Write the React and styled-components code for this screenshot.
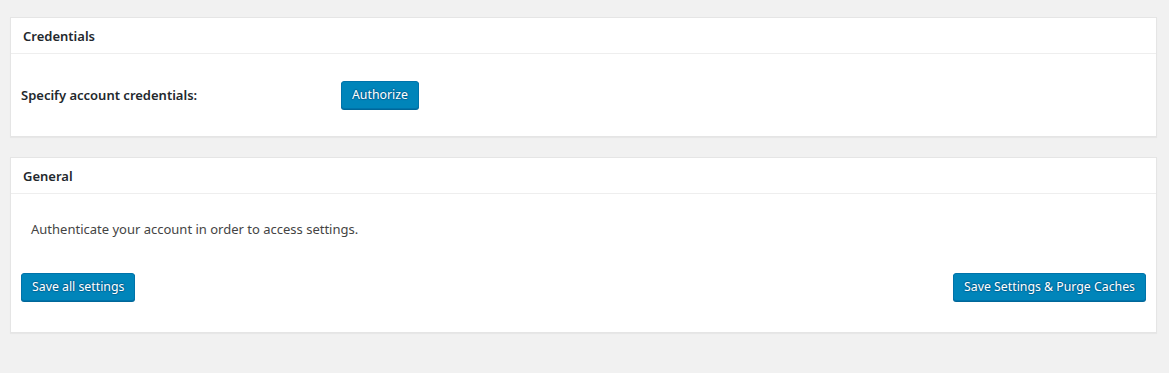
import React from 'react'
import styled, { createGlobalStyle } from 'styled-components'

const GlobalStyle = createGlobalStyle`
    html, body {
        margin: 0;
        padding: 0;
        background: #f1f1f1;
    }
    body {
        font-family: "Noto Sans", "Open Sans", sans-serif;
        font-size: 13px;
        color: #444;
    }
`

const Page = styled.div`
    padding: 17px 12px 20px 10px;
    min-height: 373px;
    box-sizing: border-box;
`

const Postbox = styled.div`
    background: #fff;
    border: 1px solid #e5e5e5;
    box-shadow: 0 1px 1px rgba(0, 0, 0, 0.04);
    margin-bottom: 20px;
`

const Heading = styled.h2`
    margin: 0;
    height: 35px;
    padding: 0 12px;
    display: flex;
    align-items: center;
    border-bottom: 1px solid #eee;
    font-size: 13px;
    font-weight: 600;
    color: #23282d;
`

const Inside = styled.div`
    padding: ${p => p.$pad || '0 10px'};
`

const FieldRow = styled.div`
    display: grid;
    grid-template-columns: 320px auto;
    align-items: center;
    height: 28px;
`

const Label = styled.span`
    font-weight: 600;
    color: #23282d;
`

const Notice = styled.p`
    margin: 0 0 34px;
    padding-left: 10px;
    line-height: 20px;
    color: #444;
`

const Actions = styled.div`
    display: flex;
    justify-content: space-between;
    align-items: center;
`

const Button = styled.button`
    font-family: inherit;
    font-size: 12.3px;
    height: 28px;
    line-height: 26px;
    padding: 0 10px 1px;
    border: 1px solid #0073aa;
    border-radius: 3px;
    background: #0085ba;
    color: #fff;
    box-shadow: 0 1px 0 #006799;
    text-shadow: 0 -1px 1px #006799, 1px 0 1px #006799, 0 1px 1px #006799, -1px 0 1px #006799;
    cursor: pointer;
    white-space: nowrap;
`

export default function App() {
    return (
        <>
            <GlobalStyle />
            <Page>
                <Postbox>
                    <Heading>Credentials</Heading>
                    <Inside $pad="27px 10px">
                        <FieldRow>
                            <Label>Specify account credentials:</Label>
                            <div>
                                <Button>Authorize</Button>
                            </div>
                        </FieldRow>
                    </Inside>
                </Postbox>
                <Postbox>
                    <Heading>General</Heading>
                    <Inside $pad="25px 10px 31px">
                        <Notice>Authenticate your account in order to access settings.</Notice>
                        <Actions>
                            <Button>Save all settings</Button>
                            <Button>Save Settings &amp; Purge Caches</Button>
                        </Actions>
                    </Inside>
                </Postbox>
            </Page>
        </>
    )
}
